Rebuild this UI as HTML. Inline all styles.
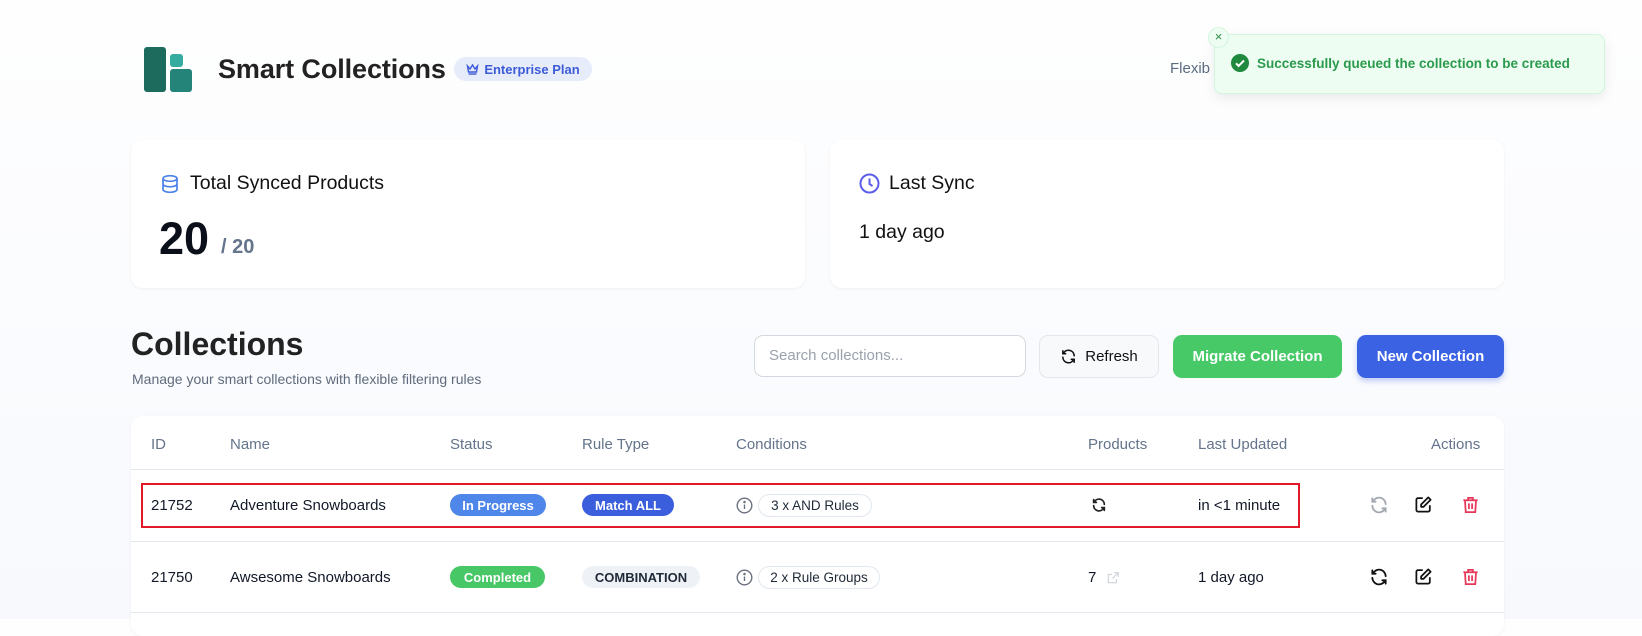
<!DOCTYPE html>
<html><head><meta charset="utf-8"><style>
*{box-sizing:border-box;margin:0;padding:0}
body{width:1642px;height:619px;overflow:hidden;background:linear-gradient(#fefefe,#f7f9fd);font-family:"Liberation Sans",sans-serif;position:relative;color:#111827}
.a{position:absolute}
.card{position:absolute;background:#fff;border-radius:12px;box-shadow:0 1px 3px rgba(15,23,42,.05)}
.btn{position:absolute;top:335px;height:43px;border-radius:9px;display:flex;align-items:center;justify-content:center;font-size:15px}
.th{position:absolute;top:436px;font-size:15px;color:#64748b}
.td{position:absolute;font-size:15px;color:#111827}
.pill{position:absolute;height:22px;border-radius:11px;font-size:13px;font-weight:bold;display:flex;align-items:center;justify-content:center}
.chip{position:absolute;height:23px;border:1px solid #e2e8f0;border-radius:12px;font-size:13.5px;display:flex;align-items:center;justify-content:center;color:#1f2937}
</style></head><body>
<div class="a" style="left:144px;top:47px;width:22px;height:45px;background:#1d6b5c;border-radius:3px"></div>
<div class="a" style="left:170px;top:54px;width:13px;height:13px;background:#36aba0;border-radius:3px"></div>
<div class="a" style="left:170px;top:69px;width:22px;height:23px;background:#258479;border-radius:3px"></div>
<div class="a" style="left:218px;top:54px;font-size:27px;font-weight:bold;color:#222;letter-spacing:-0.1px">Smart Collections</div>
<div class="a" style="left:454px;top:57px;width:138px;height:24px;border-radius:12px;background:#e7ecfb;color:#3c5bd8;font-size:13px;font-weight:bold;display:flex;align-items:center;justify-content:center;gap:5px">
<svg width="13" height="12" viewBox="0 0 13 12" fill="none" stroke="#3c5bd8" stroke-width="1.4"><path d="M1.5 3l2.5 3 2.5-4 2.5 4 2.5-3-1 6H2.5z"/><path d="M2.5 11h8"/></svg>Enterprise Plan</div>
<div class="a" style="left:1170px;top:60px;font-size:15px;color:#5b6b82">Flexib</div>
<div class="a" style="left:1214px;top:34px;width:391px;height:60px;background:#edfdf2;border:1px solid #d3f5dd;border-radius:8px;box-shadow:0 4px 12px rgba(0,0,0,.08)"></div>
<div class="a" style="left:1208px;top:27px;width:21px;height:21px;border-radius:50%;background:#edfdf2;border:1px solid #d3f5dd;color:#2f8f4c;font-size:13px;text-align:center;line-height:18px">×</div>
<svg class="a" style="left:1231px;top:54px" width="18" height="18" viewBox="0 0 18 18"><circle cx="9" cy="9" r="9" fill="#1f8a3e"/><path d="M5 9.3l2.6 2.6L13 6.5" stroke="#fff" stroke-width="2" fill="none"/></svg>
<div class="a" style="left:1257px;top:56px;font-size:13.5px;font-weight:bold;color:#2a9a4c">Successfully queued the collection to be created</div>
<div class="card" style="left:131px;top:140px;width:674px;height:148px"></div>
<svg class="a" style="left:160px;top:174px" width="20" height="20" viewBox="0 0 20 20" fill="none" stroke="#4b82ea" stroke-width="1.7"><ellipse cx="10" cy="4.5" rx="7" ry="2.8"/><path d="M3 4.5v11c0 1.5 3 2.8 7 2.8s7-1.3 7-2.8v-11M3 10c0 1.5 3 2.8 7 2.8s7-1.3 7-2.8"/></svg>
<div class="a" style="left:190px;top:172px;font-size:19.5px;color:#111">Total Synced Products</div>
<div class="a" style="left:159px;top:213px;font-size:45px;font-weight:bold;color:#0b0f19">20</div>
<div class="a" style="left:221px;top:236px;font-size:20px;font-weight:bold;color:#64748b">/ 20</div>
<div class="card" style="left:830px;top:140px;width:674px;height:148px"></div>
<svg class="a" style="left:859px;top:173px" width="21" height="21" viewBox="0 0 21 21" fill="none" stroke="#5b5ee8" stroke-width="2"><circle cx="10.5" cy="10.5" r="9"/><path d="M10.5 5.5v5.5l3 2"/></svg>
<div class="a" style="left:889px;top:172px;font-size:19.5px;color:#111">Last Sync</div>
<div class="a" style="left:859px;top:221px;font-size:19.5px;color:#111">1 day ago</div>
<div class="a" style="left:131px;top:326px;font-size:32px;font-weight:bold;color:#222">Collections</div>
<div class="a" style="left:132px;top:371px;font-size:14px;color:#5f6b7d">Manage your smart collections with flexible filtering rules</div>
<div class="a" style="left:754px;top:335px;width:272px;height:42px;border:1px solid #d4d8e0;border-radius:9px;background:#fff;font-size:15px;color:#9aa2ae;padding:11px 14px">Search collections...</div>
<div class="btn" style="left:1039px;width:120px;background:#f8f9fb;border:1px solid #e3e6eb;gap:8px;color:#111">
<svg width="17" height="17" viewBox="0 0 24 24" fill="none" stroke="#111" stroke-width="2.2" stroke-linecap="round"><path d="M20 11A8 8 0 0 0 5.5 6.5L4 8M4 4v4h4M4 13a8 8 0 0 0 14.5 4.5L20 16M20 20v-4h-4"/></svg>Refresh</div>
<div class="btn" style="left:1173px;width:169px;background:#48c968;color:#fff;font-weight:bold">Migrate Collection</div>
<div class="btn" style="left:1357px;width:147px;background:#3a62e3;color:#fff;font-weight:bold;box-shadow:0 3px 6px rgba(58,98,227,.3)">New Collection</div>
<div class="card" style="left:131px;top:416px;width:1373px;height:220px"></div>
<div class="a" style="left:131px;top:469px;width:1373px;height:1px;background:#e3e7ee"></div>
<div class="a" style="left:131px;top:541px;width:1373px;height:1px;background:#e3e7ee"></div>
<div class="a" style="left:131px;top:612px;width:1373px;height:1px;background:#e3e7ee"></div>
<div class="th" style="left:151px">ID</div><div class="th" style="left:230px">Name</div><div class="th" style="left:450px">Status</div><div class="th" style="left:582px">Rule Type</div><div class="th" style="left:736px">Conditions</div><div class="th" style="left:1088px">Products</div><div class="th" style="left:1198px">Last Updated</div><div class="th" style="left:1431px">Actions</div>
<div class="td" style="left:151px;top:497px">21752</div>
<div class="td" style="left:230px;top:497px">Adventure Snowboards</div>
<div class="pill" style="left:450px;top:494px;width:96px;background:#4f86e9;color:#fff">In Progress</div>
<div class="pill" style="left:582px;top:494px;width:92px;background:#3a5edc;color:#fff">Match ALL</div>
<svg class="a" style="left:736px;top:497px" width="17" height="17" viewBox="0 0 17 17" fill="none" stroke="#6b7280" stroke-width="1.4"><circle cx="8.5" cy="8.5" r="7.3"/><path d="M8.5 7.5v4.5"/><circle cx="8.5" cy="5" r=".6" fill="#6b7280"/></svg>
<div class="chip" style="left:758px;top:494px;width:114px">3 x AND Rules</div>
<svg class="a" style="left:1091px;top:497px" width="16" height="16" viewBox="0 0 24 24" fill="none" stroke="#222" stroke-width="2.6" stroke-linecap="round"><path d="M20 11A8 8 0 0 0 5.5 6.5L4 8M4 4v4h4M4 13a8 8 0 0 0 14.5 4.5L20 16M20 20v-4h-4"/></svg>
<div class="td" style="left:1198px;top:497px">in &lt;1 minute</div>
<svg class="a" style="left:1369px;top:495px" width="20" height="20" viewBox="0 0 24 24" fill="none" stroke="#a3a8b0" stroke-width="2.2" stroke-linecap="round"><path d="M20 11A8 8 0 0 0 5.5 6.5L4 8M4 4v4h4M4 13a8 8 0 0 0 14.5 4.5L20 16M20 20v-4h-4"/></svg>
<svg class="a" style="left:1414px;top:495px" width="19" height="19" viewBox="0 0 24 24" fill="none" stroke="#111" stroke-width="2.2" stroke-linejoin="round"><path d="M11 4H5a2 2 0 0 0-2 2v13a2 2 0 0 0 2 2h13a2 2 0 0 0 2-2v-6"/><path d="M18 3l3 3-9 9H9v-3z"/></svg>
<svg class="a" style="left:1461px;top:495px" width="19" height="20" viewBox="0 0 24 24" fill="none" stroke="#e8355a" stroke-width="2.2"><path d="M3 6h18M9 6V3h6v3M5 6l1 15h12l1-15M10 10v7M14 10v7"/></svg>
<div class="td" style="left:151px;top:569px">21750</div>
<div class="td" style="left:230px;top:569px">Awsesome Snowboards</div>
<div class="pill" style="left:450px;top:566px;width:95px;background:#48c766;color:#fff">Completed</div>
<div class="pill" style="left:582px;top:566px;width:118px;background:#eef1f6;color:#1f2937">COMBINATION</div>
<svg class="a" style="left:736px;top:569px" width="17" height="17" viewBox="0 0 17 17" fill="none" stroke="#6b7280" stroke-width="1.4"><circle cx="8.5" cy="8.5" r="7.3"/><path d="M8.5 7.5v4.5"/><circle cx="8.5" cy="5" r=".6" fill="#6b7280"/></svg>
<div class="chip" style="left:758px;top:566px;width:122px">2 x Rule Groups</div>
<div class="td" style="left:1088px;top:569px">7</div>
<svg class="a" style="left:1106px;top:571px" width="14" height="14" viewBox="0 0 24 24" fill="none" stroke="#cfd4db" stroke-width="2"><path d="M14 3h7v7M21 3l-10 10M18 14v6H4V6h6"/></svg>
<div class="td" style="left:1198px;top:569px">1 day ago</div>
<svg class="a" style="left:1369px;top:567px" width="20" height="20" viewBox="0 0 24 24" fill="none" stroke="#111" stroke-width="2.2" stroke-linecap="round"><path d="M20 11A8 8 0 0 0 5.5 6.5L4 8M4 4v4h4M4 13a8 8 0 0 0 14.5 4.5L20 16M20 20v-4h-4"/></svg>
<svg class="a" style="left:1414px;top:567px" width="19" height="19" viewBox="0 0 24 24" fill="none" stroke="#111" stroke-width="2.2" stroke-linejoin="round"><path d="M11 4H5a2 2 0 0 0-2 2v13a2 2 0 0 0 2 2h13a2 2 0 0 0 2-2v-6"/><path d="M18 3l3 3-9 9H9v-3z"/></svg>
<svg class="a" style="left:1461px;top:567px" width="19" height="20" viewBox="0 0 24 24" fill="none" stroke="#e8355a" stroke-width="2.2"><path d="M3 6h18M9 6V3h6v3M5 6l1 15h12l1-15M10 10v7M14 10v7"/></svg>
<div class="a" style="left:141px;top:483px;width:1159px;height:45px;border:2px solid #e3192a"></div>
</body></html>
